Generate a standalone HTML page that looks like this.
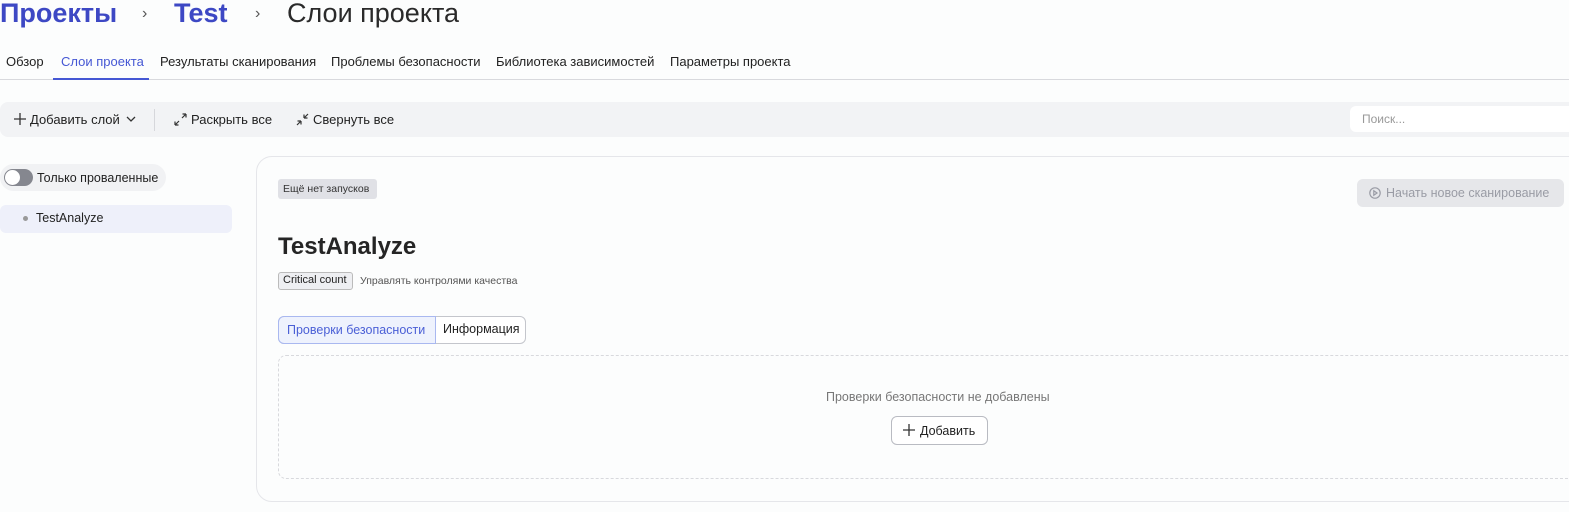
<!DOCTYPE html>
<html><head><meta charset="utf-8"><style>
*{box-sizing:border-box;margin:0;padding:0}
body{width:1569px;height:512px;overflow:hidden;background:#fcfdfd;font-family:"Liberation Sans",sans-serif;color:#222;position:relative}
.a{position:absolute;white-space:nowrap}
</style></head><body>
<div class="a" style="left:0;top:-4px;font-size:27px;line-height:34px;color:#3d48c4;font-weight:bold">Проекты</div>
<div class="a" style="left:142px;top:5px;font-size:16px;color:#555">›</div>
<div class="a" style="left:174px;top:-4px;font-size:27px;line-height:34px;color:#3d48c4;font-weight:bold">Test</div>
<div class="a" style="left:255px;top:5px;font-size:16px;color:#555">›</div>
<div class="a" style="left:287px;top:-4px;font-size:27px;line-height:34px;color:#2a2a2a">Слои проекта</div>
<div class="a" style="left:0;top:79px;width:1569px;height:1px;background:#d8d9dd"></div>
<div class="a" style="left:53px;top:78px;width:96px;height:2px;background:#4557d4"></div>
<div class="a" style="top:54px;font-size:13px;left:0;width:1569px">
<span class="a" style="left:6px">Обзор</span>
<span class="a" style="left:61px;color:#4557d4">Слои проекта</span>
<span class="a" style="left:160px">Результаты сканирования</span>
<span class="a" style="left:331px">Проблемы безопасности</span>
<span class="a" style="left:496px">Библиотека зависимостей</span>
<span class="a" style="left:670px">Параметры проекта</span></div>
<div class="a" style="left:0;top:102px;width:1569px;height:35px;background:#f2f3f5;border-radius:8px 0 0 8px"></div>
<div class="a" style="left:14px;top:112px;font-size:13px"><svg width="12" height="12" viewBox="0 0 12 12" style="vertical-align:-1px;margin-right:4px" stroke="#333" stroke-width="1.3"><path d="M6 0V12M0 6H12"/></svg>Добавить слой<svg width="10" height="6" viewBox="0 0 10 6" style="margin-left:6px;vertical-align:2px" fill="none" stroke="#333" stroke-width="1.3"><path d="M1 1L5 5L9 1"/></svg></div>
<div class="a" style="left:154px;top:109px;width:1px;height:22px;background:#d6d7db"></div>
<div class="a" style="left:174px;top:112px;font-size:13px"><svg width="13" height="13" viewBox="0 0 13 13" style="vertical-align:-2px;margin-right:4px" fill="none" stroke="#333" stroke-width="1.2"><path d="M1 12L5 8M1 12V8.5M1 12H4.5M12 1L8 5M12 1V4.5M12 1H8.5"/></svg>Раскрыть все</div>
<div class="a" style="left:296px;top:112px;font-size:13px"><svg width="13" height="13" viewBox="0 0 13 13" style="vertical-align:-2px;margin-right:4px" fill="none" stroke="#333" stroke-width="1.2"><path d="M1 12L5 8M5 8V11.5M5 8H1.5M12 1L8 5M8 5V1.5M8 5H11.5"/></svg>Свернуть все</div>
<div class="a" style="left:1350px;top:106px;width:230px;height:26px;background:#fff;border-radius:6px;font-size:12px;color:#999;padding:6px 12px">Поиск...</div>
<div class="a" style="left:0;top:164px;width:166px;height:27px;background:#f1f2f4;border-radius:14px"></div>
<div class="a" style="left:4px;top:169px;width:29px;height:17px;background:#85878f;border-radius:9px"><div style="position:absolute;left:1px;top:1px;width:15px;height:15px;border-radius:50%;background:#fff"></div></div>
<div class="a" style="left:37px;top:171px;font-size:12.5px">Только проваленные</div>
<div class="a" style="left:0;top:205px;width:232px;height:28px;background:#eef0fa;border-radius:6px"></div>
<div class="a" style="left:23px;top:216px;width:5px;height:5px;border-radius:50%;background:#999"></div>
<div class="a" style="left:36px;top:211px;font-size:12.5px">TestAnalyze</div>
<div class="a" style="left:256px;top:156px;width:1340px;height:346px;border:1px solid #e5e6ea;border-radius:16px;background:#fcfdfd"></div>
<div class="a" style="left:278px;top:179px;width:99px;height:20px;background:#e0e1e6;border-radius:3px;font-size:10.5px;padding:4px 5px;color:#333">Ещё нет запусков</div>
<div class="a" style="left:1357px;top:179px;width:207px;height:28px;background:#e6e7ea;border-radius:6px;font-size:12.5px;color:#9a9ca5;padding:7px 0 0 12px"><svg width="12" height="12" viewBox="0 0 12 12" style="vertical-align:-2px;margin-right:5px" fill="none" stroke="#9a9ca5" stroke-width="1.2"><circle cx="6" cy="6" r="5.2"/><path d="M4.8 3.8L8 6L4.8 8.2Z"/></svg>Начать новое сканирование</div>
<div class="a" style="left:278px;top:233px;font-size:24px;font-weight:bold;color:#252525">TestAnalyze</div>
<div class="a" style="left:278px;top:272px;width:75px;height:18px;border:1px solid #bbb;background:#eeeff2;border-radius:3px;font-size:11px;padding:1px 4px">Critical count</div>
<div class="a" style="left:360px;top:275px;font-size:10.5px;color:#555">Управлять контролями качества</div>
<div class="a" style="left:278px;top:316px;width:248px;height:28px;border:1px solid #c4c6cc;border-radius:6px;background:#fff"></div>
<div class="a" style="left:278px;top:316px;width:158px;height:28px;border:1px solid #a9b8f0;border-radius:6px 0 0 6px;background:#eef2fd;color:#4a5fd6;font-size:12.5px;padding:6px 0 0 8px">Проверки безопасности</div>
<div class="a" style="left:443px;top:322px;font-size:12.5px">Информация</div>
<div class="a" style="left:278px;top:355px;width:1320px;height:124px;border:1px dashed #d8d9dd;border-radius:8px"></div>
<div class="a" style="left:826px;top:390px;font-size:12.5px;color:#777">Проверки безопасности не добавлены</div>
<div class="a" style="left:891px;top:416px;width:97px;height:29px;border:1px solid #b9bbc2;border-radius:6px;background:#fff;font-size:12.5px;padding:7px 0 0 11px"><svg width="12" height="12" viewBox="0 0 12 12" style="vertical-align:-1px;margin-right:5px" stroke="#333" stroke-width="1.3"><path d="M6 0V12M0 6H12"/></svg>Добавить</div>
</body></html>
